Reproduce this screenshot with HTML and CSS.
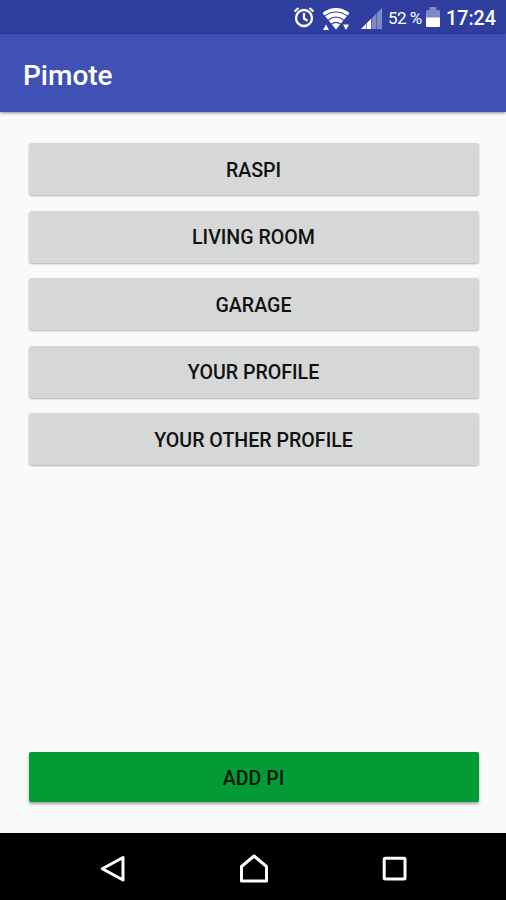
FILE: index.html
```html
<!DOCTYPE html>
<html lang="en">

<head>
  <meta charset="UTF-8">
  <meta name="viewport" content="width=device-width, initial-scale=1.0">
  <title>Pimote</title>
  <link rel="stylesheet" href="styles.css">
</head>

<body>

  <div class="status-bar">
    <svg class="alarm" width="22" height="22" viewBox="0 0 22 22">
      <circle cx="11" cy="12" r="8" />
      <path d="M11 7v5.500l3.500 2.200M1.500 5.500l4-3.500M20.500 5.500l-4-3.500" />
    </svg>
    <svg class="wifi" width="28" height="24" viewBox="0 0 28 24">
      <path class="fill" d="M.5 6C8.500-.6 19.500-.6 27.500 6L14 22.500z" />
      <path class="gap" d="M2.500 9.200c7-5.600 16-5.600 23 0M6 13.200c5-4 11-4 16 0M9.300 17.200c3-2.300 6.400-2.300 9.400 0" />
      <path class="fill" d="M1 23l3-5.500 3 5.500zM21 17.500h6L24 23z" />
    </svg>
    <svg class="signal" width="21" height="21" viewBox="0 0 21 21">
      <path class="dim" d="M0 21L21 0v21z" />
      <path class="fill" d="M0 21l10-10v10z" />
      <path class="line" d="M5.500 12v9M10.500 8v13M15.500 3v18" />
    </svg>
    <span class="percent">52 %</span>
    <svg class="battery" width="14" height="20" viewBox="0 0 14 20">
      <path class="dim" d="M0 4a1 1 0 0 1 1-1h2.500V0h7v3H13a1 1 0 0 1 1 1v7H0z" />
      <path class="fill" d="M0 10.500h14V19a1 1 0 0 1-1 1H1a1 1 0 0 1-1-1z" />
    </svg>
    <span class="clock">17:24</span>
  </div>

  <div class="app-bar">
    <h1>Pimote</h1>
  </div>

  <div class="content">
    <div class="profiles">
      <button>Raspi</button>
      <button>Living room</button>
      <button>Garage</button>
      <button>Your profile</button>
      <button>Your other profile</button>
    </div>
    <button class="add">Add Pi</button>
  </div>

  <div class="nav-bar">
    <svg width="28" height="30" viewBox="0 0 28 30">
      <path d="M25 3.500v22.500L4.300 14.800z" />
    </svg>
    <svg width="30" height="30" viewBox="0 0 30 30">
      <path d="M2.500 12.500L15 2l12.500 10.500V27h-25z" />
    </svg>
    <svg width="28" height="30" viewBox="0 0 28 30">
      <rect x="3.200" y="4.300" width="20.800" height="20.800" rx="1" />
    </svg>
  </div>

</body>

</html>
```
FILE: styles.css
```css
* {
  box-sizing: border-box;
}

body {
  margin: 0;
  height: 900px;
  overflow: hidden;
  display: flex;
  flex-direction: column;
  background-color: #fafafa;
  font-family: Roboto, "Liberation Sans", sans-serif;
}

.status-bar {
  height: 34px;
  padding-right: 11px;
  display: flex;
  align-items: center;
  justify-content: flex-end;
  background-color: #303f9f;
  color: #fff;
}

.status-bar svg {
  flex: none;
  fill: none;
}

.status-bar .fill {
  fill: #fff;
}

.status-bar .dim {
  fill: #7f89c5;
}

.alarm {
  stroke: #fff;
  stroke-width: 2.3;
  margin-right: 7px;
}

.wifi {
  margin: 4px 11px 0 0;
}

.wifi .gap {
  stroke: #303f9f;
  stroke-width: 1.1;
}

.signal {
  margin: 3px 6px 0 0;
}

.signal .line {
  stroke: #303f9f;
  stroke-width: 0.5;
}

.percent {
  width: 34px;
  font-size: 17px;
  letter-spacing: -0.5px;
  white-space: nowrap;
  margin: 2px 4px 0 0;
}

.battery {
  margin-right: 6px;
}

.clock {
  width: 49px;
  font-size: 19.700px;
  font-weight: 500;
  margin-top: 2px;
}

.app-bar {
  height: 78px;
  padding: 4px 23px 0;
  display: flex;
  align-items: center;
  background-color: #3f51b5;
  box-shadow: 0 1px 3px rgba(0, 0, 0, 0.45);
}

.app-bar h1 {
  margin: 0;
  color: #fff;
  font-size: 28px;
  font-weight: 500;
}

.content {
  flex: 1;
  padding: 31px 27.500px 31px 28.500px;
  display: flex;
  flex-direction: column;
  justify-content: space-between;
}

.profiles {
  display: flex;
  flex-direction: column;
  gap: 15.500px;
}

button {
  width: 100%;
  height: 52px;
  padding: 2px 0 0;
  border: none;
  border-radius: 3px;
  background-color: #d6d8d7;
  box-shadow: 0 1px 2px rgba(0, 0, 0, 0.3);
  color: #111;
  font-family: inherit;
  font-size: 19.600px;
  font-weight: 500;
  text-transform: uppercase;
}

.add {
  height: 50px;
  border-radius: 2px;
  background-color: #049a35;
  box-shadow: 0 2px 3px rgba(0, 0, 0, 0.35);
  color: #041a09;
}

.nav-bar {
  height: 67px;
  padding: 5px 97px 0 98px;
  display: flex;
  align-items: center;
  justify-content: space-between;
  background-color: #000;
}

.nav-bar svg {
  fill: none;
  stroke: #fff;
  stroke-width: 3;
  stroke-linejoin: round;
}
```
